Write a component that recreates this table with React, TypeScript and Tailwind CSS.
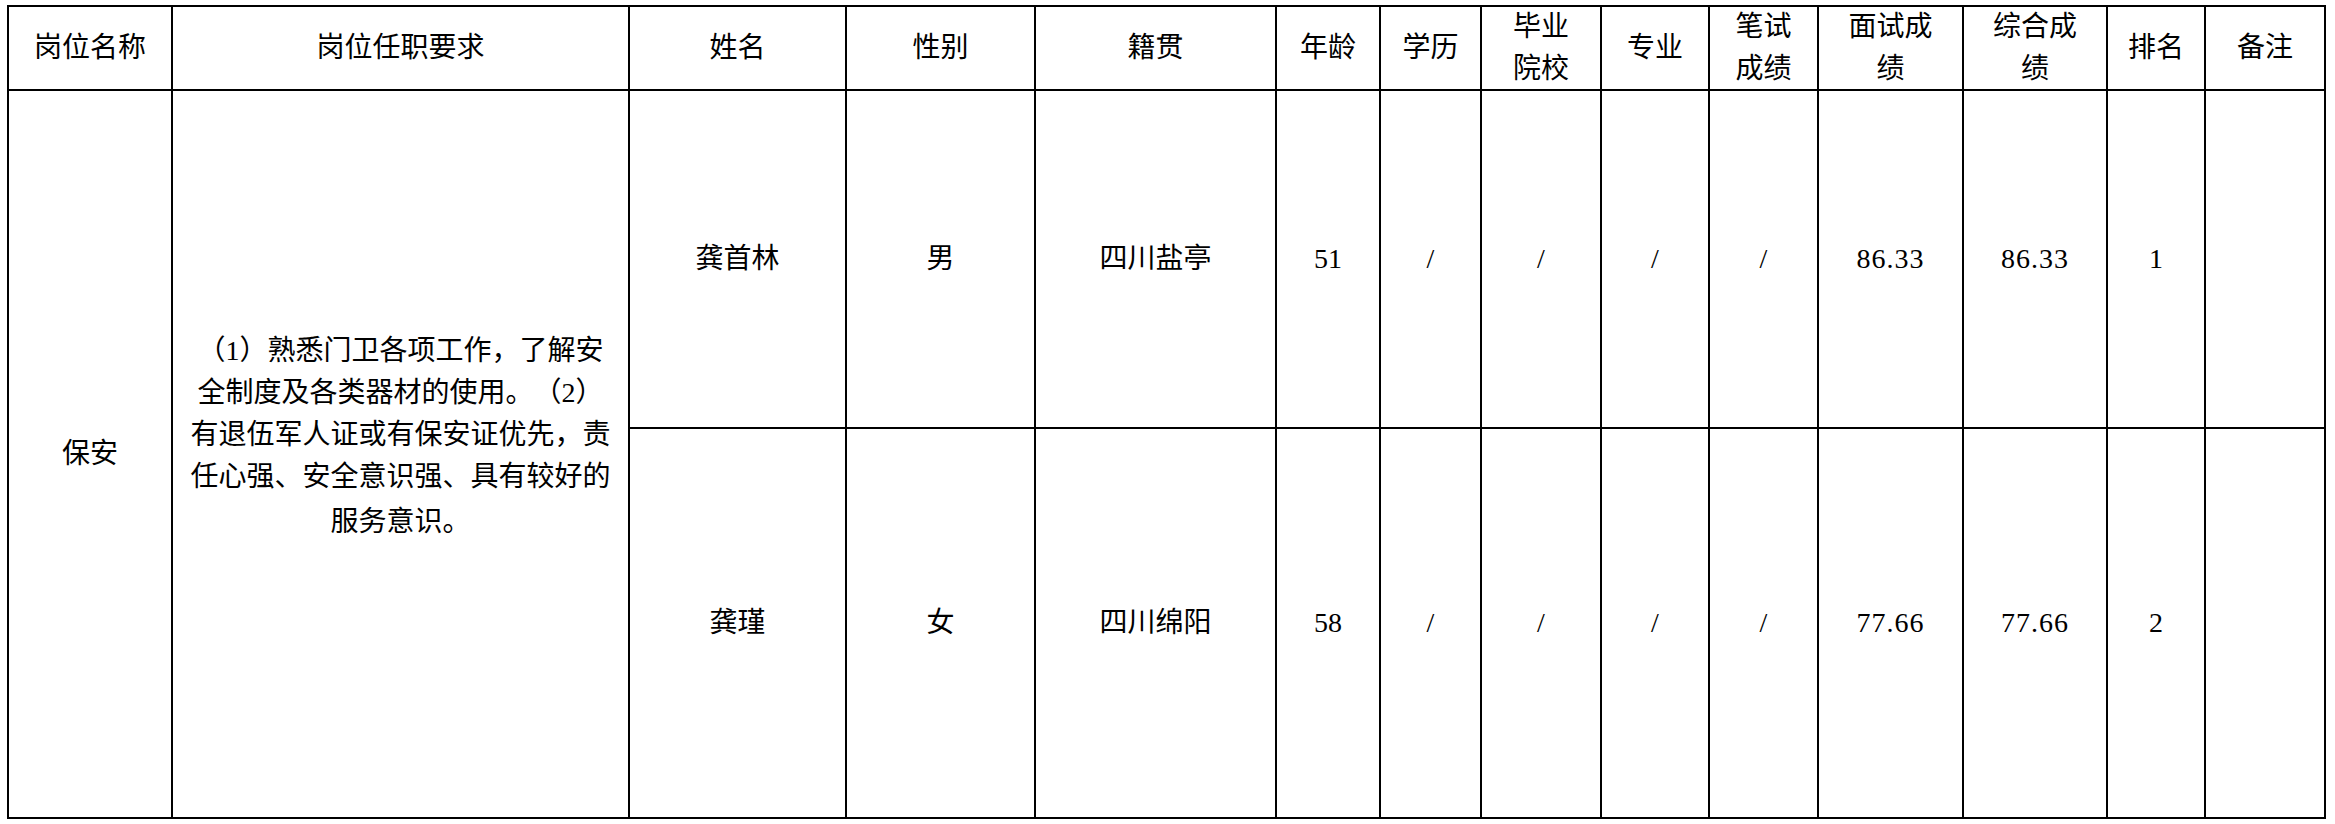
import React from 'react';

const headers: string[][] = [
  ['岗位名称'],
  ['岗位任职要求'],
  ['姓名'],
  ['性别'],
  ['籍贯'],
  ['年龄'],
  ['学历'],
  ['毕业', '院校'],
  ['专业'],
  ['笔试', '成绩'],
  ['面试成', '绩'],
  ['综合成', '绩'],
  ['排名'],
  ['备注'],
];

const requirement = [
  '（1）熟悉门卫各项工作，了解安',
  '全制度及各类器材的使用。（2）',
  '有退伍军人证或有保安证优先，责',
  '任心强、安全意识强、具有较好的',
];

const people = [
  ['龚首林', '男', '四川盐亭', '51', '/', '/', '/', '/', '86.33', '86.33', '1', ''],
  ['龚瑾', '女', '四川绵阳', '58', '/', '/', '/', '/', '77.66', '77.66', '2', ''],
];

const cell = 'bg-white flex flex-col items-center justify-center text-center';

export default function App() {
  return (
    <div
      className="min-h-screen bg-white pt-[5px] pl-[7px] text-black text-[28px] [text-spacing-trim:space-all]"
      style={{ fontFamily: '"Liberation Serif", "Noto Sans CJK SC", serif' }}
    >
      <div className="grid w-fit bg-black p-[2px] gap-[2px] grid-cols-[162px_455px_215px_187px_239px_102px_99px_118px_106px_107px_143px_142px_96px_118px] grid-rows-[82px_336px_388px]">
        {headers.map((lines, i) => (
          <div key={i} className={`${cell} leading-[42px]`}>
            {lines.map((l) => (
              <span key={l}>{l}</span>
            ))}
          </div>
        ))}

        <div className={`${cell} row-span-2`}>保安</div>
        <div className={`${cell} row-span-2 leading-[42px] pb-[36px]`}>
          {requirement.map((l) => (
            <span key={l} className="whitespace-nowrap">{l}</span>
          ))}
          <span className="mt-[3px]">服务意识。</span>
        </div>

        {people.map((row, r) =>
          row.map((v, c) => (
            <div key={`${r}-${c}`} className={`${cell} ${v.includes('.') ? 'tracking-[1px]' : ''}`}>
              {v}
            </div>
          ))
        )}
      </div>
    </div>
  );
}
